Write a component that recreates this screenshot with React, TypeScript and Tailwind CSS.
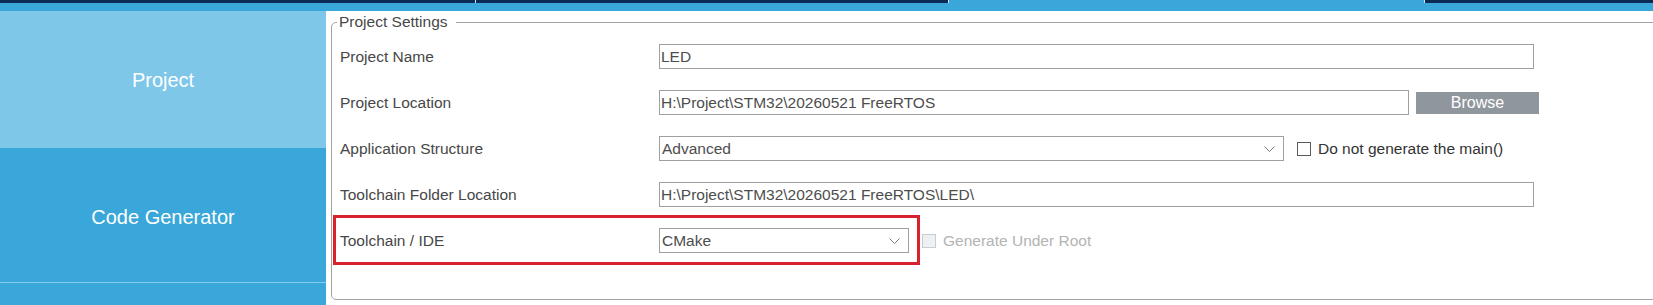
const font = "font-['Liberation_Sans',Arial,sans-serif]";

const Chevron = () => (
    <svg width="11" height="6" viewBox="0 0 11 6" className="shrink-0">
        <polyline points="0.5,0.5 5.5,5.5 10.5,0.5" fill="none" stroke="#7d7d7d" strokeWidth="1" />
    </svg>
);

const TextBox = ({ value, width }: { value: string; width: string }) => (
    <div className={`${width} h-[25px] shrink-0 border border-[#a0a0a0] px-[1px] flex items-center text-[15.5px] text-[#4d4d4d] whitespace-nowrap`}>
        {value}
    </div>
);

const Select = ({ value, width }: { value: string; width: string }) => (
    <div className={`${width} h-[25px] shrink-0 border border-[#a0a0a0] pl-[2px] pr-[8px] flex items-center justify-between text-[15.5px] text-[#4d4d4d]`}>
        <span>{value}</span>
        <Chevron />
    </div>
);

const Check = ({ label, disabled }: { label: string; disabled?: boolean }) => (
    <div className="flex items-center ml-[13px]">
        <div
            className={`w-[14px] h-[14px] border ${disabled ? "border-[#c9cdd0] bg-[#eef1f3]" : "border-[#5a5a5a] bg-white"}`}
        />
        <span className={`ml-[7px] text-[15.5px] whitespace-nowrap ${disabled ? "text-[#b3b3b3]" : "text-[#333333]"}`}>
            {label}
        </span>
    </div>
);

const Row = ({ label, children }: { label: string; children: React.ReactNode }) => (
    <div className="flex items-center h-[25px]">
        <div className="w-[319px] shrink-0 text-[15.5px] text-[#474747] whitespace-nowrap">{label}</div>
        {children}
    </div>
);

const topTabs = [
    { w: "w-[475px]", bg: "bg-[#0b2a56]" },
    { w: "w-[472px]", bg: "bg-[#0b2a56]" },
    { w: "w-[475px]", bg: "bg-[#3aa7da]" },
    { w: "flex-1", bg: "bg-[#0b2a56]" },
];

export default function App() {
    return (
        <div className={`${font} w-[1653px] h-[305px] overflow-hidden bg-white`}>
            <div className="flex h-[3px] bg-[#cfe6f3] gap-px">
                {topTabs.map((t, i) => (
                    <div key={i} className={`${t.w} ${t.bg} h-full`} />
                ))}
            </div>
            <div className="h-[8px] bg-[#3aa7da]" />

            <div className="flex h-[294px]">
                <aside className="w-[326px] shrink-0 flex flex-col bg-[#39a7da] text-white text-[20px]">
                    <div className="h-[137px] bg-[#7ec7e9] flex items-center justify-center">Project</div>
                    <div className="h-[135px] border-b border-[#86ccec] flex items-center justify-center pt-[4px]">
                        Code Generator
                    </div>
                    <div className="flex-1" />
                </aside>

                <div className="flex-1 overflow-hidden pl-[5px] pt-[2px]">
                    <fieldset className="w-[1340px] h-[287px] border border-[#a3a3a3] rounded-[5px] pl-[8px] pt-[13px]">
                        <legend className="ml-[-3px] pl-[2px] pr-[8px] text-[15.5px] leading-[18px] text-[#474747]">
                            Project Settings
                        </legend>
                        <div className="flex flex-col gap-[21px]">
                            <Row label="Project Name">
                                <TextBox value="LED" width="w-[875px]" />
                            </Row>
                            <Row label="Project Location">
                                <TextBox value="H:\Project\STM32\20260521 FreeRTOS" width="w-[750px]" />
                                <button className="ml-[7px] w-[123px] h-[22px] mt-[1px] bg-[#8f979d] text-white text-[16px] leading-none">
                                    Browse
                                </button>
                            </Row>
                            <Row label="Application Structure">
                                <Select value="Advanced" width="w-[625px]" />
                                <Check label="Do not generate the main()" />
                            </Row>
                            <Row label="Toolchain Folder Location">
                                <TextBox value="H:\Project\STM32\20260521 FreeRTOS\LED\" width="w-[875px]" />
                            </Row>
                            <div className="relative">
                                <Row label="Toolchain / IDE">
                                    <Select value="CMake" width="w-[250px]" />
                                    <Check label="Generate Under Root" disabled />
                                </Row>
                                <div className="absolute left-[-7px] top-[-13px] w-[587px] h-[50px] border-[3px] border-[#d8232e] pointer-events-none" />
                            </div>
                        </div>
                    </fieldset>
                </div>
            </div>
        </div>
    );
}
